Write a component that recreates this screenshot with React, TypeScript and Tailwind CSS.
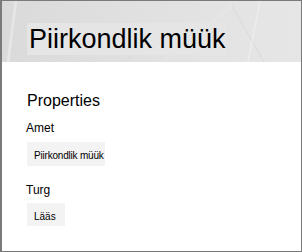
import React from "react";

export default function App() {
  return (
    <div
      className="w-[302px] h-[252px] box-border border border-l-2 border-[#7a7a7a] bg-white text-black overflow-hidden"
      style={{ fontFamily: '"Liberation Sans", Arial, sans-serif' }}
    >
      <div className="relative h-[61px] bg-gradient-to-r from-[#dadada] via-[#e1e1e1] to-[#e6e6e6] overflow-hidden">
        <svg className="absolute inset-0" width="300" height="61" viewBox="0 0 300 61">
          <line x1="14" y1="0" x2="6" y2="61" stroke="#ffffff" strokeOpacity="0.3" strokeWidth="3" />
          <line x1="160" y1="61" x2="230" y2="5" stroke="#ffffff" strokeOpacity="0.25" strokeWidth="1" />
          <line x1="230" y1="5" x2="262" y2="61" stroke="#cfcfcf" strokeOpacity="0.45" strokeWidth="1" />
          <line x1="258" y1="0" x2="246" y2="61" stroke="#ffffff" strokeOpacity="0.25" strokeWidth="2" />
          <line x1="120" y1="61" x2="175" y2="30" stroke="#d2d2d2" strokeOpacity="0.35" strokeWidth="1" />
        </svg>
        <div className="relative ml-[25px] pt-[22px]">
          <div className="inline-block w-[199px] h-[32px] pl-[2px] bg-[#e5e5e5] text-[27px] leading-[32px] whitespace-nowrap">
            Piirkondlik müük
          </div>
        </div>
      </div>
      <div className="pl-[25px] pt-[29px]">
        <div className="text-[16px] leading-[20px] text-black">Properties</div>
        <div className="mt-[10px] text-[12px] leading-[14px] -ml-[1px]">Amet</div>
        <div className="mt-[7px] w-[78px] h-[24px] bg-[#f3f3f3] pl-[7px] pt-[8px] text-[10px] leading-[12px] tracking-[-0.2px] whitespace-nowrap">
          Piirkondlik müük
        </div>
        <div className="mt-[17px] text-[12px] leading-[14px] -ml-[1px]">Turg</div>
        <div className="mt-[6px] w-[38px] h-[23px] bg-[#f3f3f3] pl-[7px] pt-[8px] text-[10px] leading-[12px] whitespace-nowrap">
          Lääs
        </div>
      </div>
    </div>
  );
}
